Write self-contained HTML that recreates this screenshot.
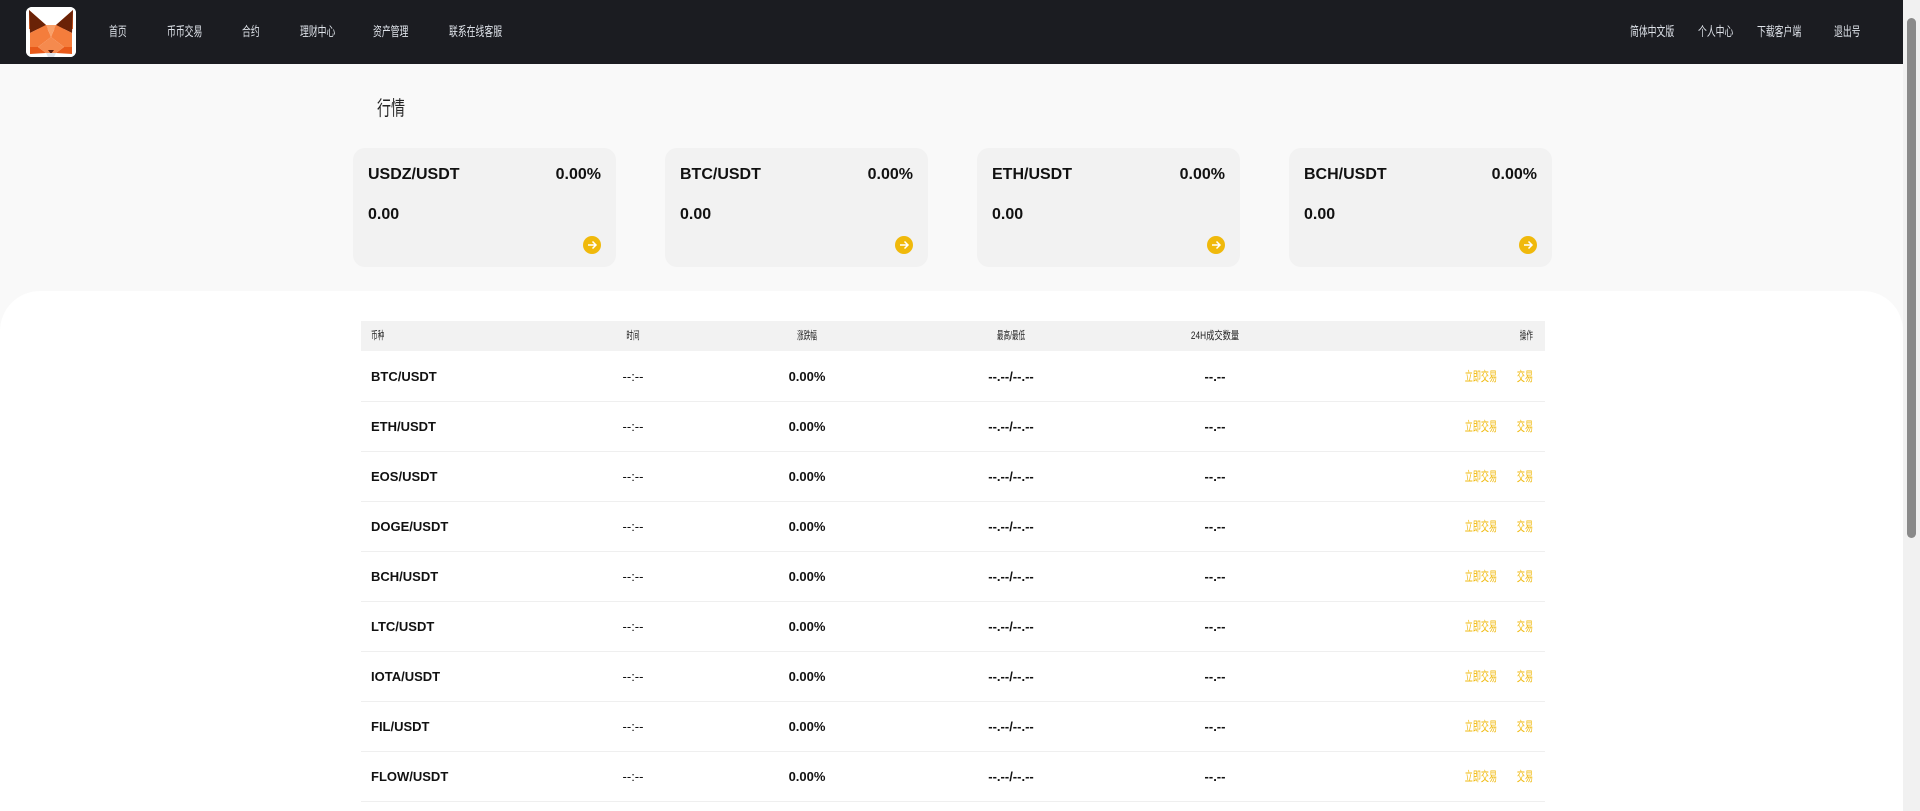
<!DOCTYPE html>
<html><head><meta charset="utf-8"><style>
*{margin:0;padding:0;box-sizing:border-box}
html,body{width:1920px;height:811px;overflow:hidden;background:#f9f9f9;font-family:"Liberation Sans","Noto Sans CJK SC",sans-serif}
.nav{position:absolute;left:0;top:0;width:1903px;height:64px;background:#1b1c21}
.logo{position:absolute;left:26px;top:7px;width:50px;height:50px;background:#fff;border-radius:6px;overflow:hidden}
.ni{position:absolute;top:23px;color:#dfe3ea;font-size:13px;line-height:18px;white-space:nowrap;transform:scaleX(.68);transform-origin:left}
.title{position:absolute;left:377px;top:92px;font-size:20px;color:#222;transform:scaleX(.7);transform-origin:left}
.card{position:absolute;top:148px;width:263px;height:119px;background:#f2f2f2;border-radius:12px}
.card .p{position:absolute;left:15px;top:18px;font-size:16px;font-weight:bold;color:#111}
.card .c{position:absolute;right:15px;top:18px;font-size:16px;font-weight:bold;color:#111}
.card .v{position:absolute;left:15px;top:58px;font-size:16px;font-weight:bold;color:#111}
.card .a{position:absolute;right:15px;top:88px;width:18px;height:18px;border-radius:50%;background:#f0b90b}
.main{position:absolute;left:0;top:291px;width:1903px;height:520px;background:#fff;border-radius:40px 40px 0 0;overflow:hidden}
.th{position:absolute;left:361px;top:321px;width:1184px;height:30px;background:#f2f2f2;font-size:11px;color:#222}
.th span,.row span{position:absolute;top:0;white-space:nowrap}
.row{position:absolute;left:361px;width:1184px;height:50px;border-bottom:1px solid #efefef;font-size:13px;font-weight:bold;color:#111}
.row span{line-height:50px}
.y{color:#f0b90b;font-weight:normal}
.n{display:inline-block;transform:scaleX(.62)}
.sb{position:absolute;right:0;top:0;width:17px;height:811px;background:#f1f1f1}
.sb i{position:absolute;left:4px;top:18px;width:9px;height:520px;background:#8a8a8a;border-radius:5px}
</style></head><body>
<div class="nav">
<div class="logo"><svg width="50" height="50" viewBox="0 0 50 50">
<rect width="50" height="50" fill="#fff"/>
<polygon points="3,3 20,18 30,18 47,3 47,22 3,22" fill="#f26b2a"/>
<polygon points="3,3 20,18 4,26" fill="#6a2207"/>
<polygon points="47,3 30,18 46,26" fill="#6a2207"/>
<polygon points="4,26 20,18 25,30 12,40 4,40" fill="#f47d3c"/>
<polygon points="46,26 30,18 25,30 38,40 46,40" fill="#f47d3c"/>
<polygon points="20,18 30,18 25,30" fill="#f9a069"/>
<polygon points="4,40 12,40 20,46 4,47" fill="#e85a1a"/>
<polygon points="46,40 38,40 30,46 46,47" fill="#e85a1a"/>
<polygon points="12,40 25,30 38,40 30,46 20,46" fill="#f58a4e"/>
<polygon points="22,43 28,43 25,47" fill="#5a1a08"/>
<polygon points="20,46 30,46 28,50 22,50" fill="#dfe3ea"/>
</svg></div>
<div class="ni" style="left:109px">首页</div>
<div class="ni" style="left:167px">币币交易</div>
<div class="ni" style="left:242px">合约</div>
<div class="ni" style="left:300px">理财中心</div>
<div class="ni" style="left:373px">资产管理</div>
<div class="ni" style="left:449px">联系在线客服</div>
<div class="ni" style="left:1630px">简体中文版</div>
<div class="ni" style="left:1698px">个人中心</div>
<div class="ni" style="left:1757px">下载客户端</div>
<div class="ni" style="left:1834px">退出号</div>
</div>
<div class="title">行情</div>
<div class="card" style="left:353px"><div class="p">USDZ/USDT</div><div class="c">0.00%</div><div class="v">0.00</div><div class="a"><svg width="18" height="18"><path d="M5 9h8M9.5 5.5L13 9l-3.5 3.5" stroke="#fff" stroke-width="1.5" fill="none"/></svg></div></div>
<div class="card" style="left:665px"><div class="p">BTC/USDT</div><div class="c">0.00%</div><div class="v">0.00</div><div class="a"><svg width="18" height="18"><path d="M5 9h8M9.5 5.5L13 9l-3.5 3.5" stroke="#fff" stroke-width="1.5" fill="none"/></svg></div></div>
<div class="card" style="left:977px"><div class="p">ETH/USDT</div><div class="c">0.00%</div><div class="v">0.00</div><div class="a"><svg width="18" height="18"><path d="M5 9h8M9.5 5.5L13 9l-3.5 3.5" stroke="#fff" stroke-width="1.5" fill="none"/></svg></div></div>
<div class="card" style="left:1289px"><div class="p">BCH/USDT</div><div class="c">0.00%</div><div class="v">0.00</div><div class="a"><svg width="18" height="18"><path d="M5 9h8M9.5 5.5L13 9l-3.5 3.5" stroke="#fff" stroke-width="1.5" fill="none"/></svg></div></div>
<div class="main"></div>
<div class="th">
<span style="left:10px;line-height:30px;transform:scaleX(.6);transform-origin:left">币种</span>
<span style="left:272px;line-height:30px;transform:translateX(-50%) scaleX(.6)">时间</span>
<span style="left:446px;line-height:30px;transform:translateX(-50%) scaleX(.6)">涨跌幅</span>
<span style="left:650px;line-height:30px;transform:translateX(-50%) scaleX(.6)">最高/最低</span>
<span style="left:854px;line-height:30px;transform:translateX(-50%) scaleX(.75)">24H成交数量</span>
<span style="right:12px;line-height:30px;transform:scaleX(.6);transform-origin:right">操作</span>
</div>
<div id="rows" style="position:absolute;left:0;top:0;width:1903px;height:811px;overflow:hidden"></div>
<div class="sb"><i></i></div>
<script>
var n=["BTC/USDT","ETH/USDT","EOS/USDT","DOGE/USDT","BCH/USDT","LTC/USDT","IOTA/USDT","FIL/USDT","FLOW/USDT"],h="";
for(var i=0;i<n.length;i++){h+='<div class="row" style="top:'+(352+i*50)+'px"><span style="left:10px">'+n[i]+'</span><span style="left:272px;transform:translateX(-50%);font-weight:normal">--:--</span><span style="left:446px;transform:translateX(-50%)">0.00%</span><span style="left:650px;transform:translateX(-50%)">--.--/--.--</span><span style="left:854px;transform:translateX(-50%)">--.--</span><span class="y" style="right:48px;transform:scaleX(.62);transform-origin:right">立即交易</span><span class="y" style="right:12px;transform:scaleX(.62);transform-origin:right">交易</span></div>';}
document.getElementById("rows").innerHTML=h;
</script>
</body></html>
